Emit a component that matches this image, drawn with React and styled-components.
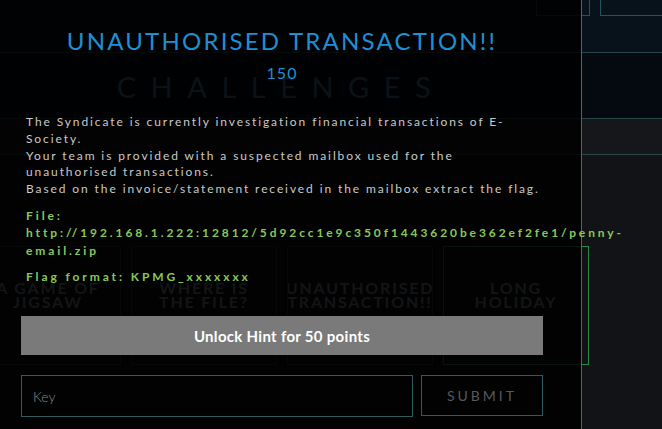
import React from "react";
import styled, { createGlobalStyle } from "styled-components";

const Global = createGlobalStyle`
  html, body { margin: 0; padding: 0; background: #111316; overflow: hidden; }
  body { font-family: Lato, "Open Sans", sans-serif; }
  * { box-sizing: border-box; }
`;

const Page = styled.div`
  position: relative;
  width: 662px;
  height: 429px;
  overflow: hidden;
  display: flex;
  flex-direction: column;
  background: #111316;
`;

const Header = styled.header`
  height: 53px;
  flex: none;
  background: #08121a;
  border-bottom: 1px solid #27464a;
  display: flex;
  justify-content: flex-end;
  align-items: flex-start;
  gap: 10px;
  margin-right: -20px;
`;

const NavButton = styled.div`
  margin-top: -16px;
  height: 32px;
  width: ${(p) => p.$w}px;
  border: 1px solid #23525a;
  color: #9aa7ad;
  font-size: 12px;
  letter-spacing: 2px;
  display: flex;
  align-items: center;
  justify-content: center;
  padding-bottom: 8px;
  line-height: 1;
`;

const TitleBand = styled.div`
  height: 66px;
  flex: none;
  background: #050a10;
  border-bottom: 1px solid #27464a;
  display: flex;
  align-items: center;
  justify-content: center;
  padding-right: 100px;
`;

const PageTitle = styled.h1`
  margin: 0;
  font-family: Lato, sans-serif;
  font-weight: 400;
  font-size: 29px;
  letter-spacing: 14.5px;
  color: #4a7fa8;
  padding-top: 2px;
`;

const TabBand = styled.div`
  height: 36px;
  flex: none;
  background: #16171a;
  border-bottom: 1px solid #27464a;
`;

const Content = styled.div`
  flex: 1;
  padding-top: 91px;
`;

const CardGrid = styled.div`
  display: grid;
  grid-template-columns: repeat(4, 146px);
  gap: 10px;
  margin-left: -25px;
`;

const Card = styled.div`
  height: 119px;
  border: 1px solid ${(p) => (p.$solved ? "#2c8a46" : "#1f3e44")};
  overflow: hidden;
  display: flex;
  align-items: flex-start;
  justify-content: center;
  padding-top: 34px;
  color: #838c94;
  font-weight: 700;
  font-size: 16px;
  line-height: 13.5px;
  letter-spacing: 1.8px;
  text-align: center;
  white-space: pre;
`;

const Modal = styled.div`
  position: absolute;
  top: 0;
  left: -17px;
  width: 599px;
  height: 100%;
  background: rgba(0, 0, 0, 0.86);
  border-right: 1px solid #3e6d70;
  padding: 27px 38px 0 38px;
  display: flex;
  flex-direction: column;
`;

const ModalTitle = styled.h2`
  margin: 0;
  text-align: center;
  font-family: Lato, sans-serif;
  font-weight: 400;
  font-size: 24px;
  line-height: 28px;
  letter-spacing: 2.2px;
  color: #1f8fd3;
`;

const Points = styled.div`
  text-align: center;
  font-size: 16px;
  line-height: 20px;
  letter-spacing: 1px;
  color: #1f8fd3;
  margin-top: 8px;
`;

const Description = styled.div`
  margin-top: 31px;
  padding: 0 3px 0 5px;
  color: #c9c9c9;
  font-size: 12px;
  line-height: 16.8px;
  letter-spacing: 1.9px;
`;

const Line = styled.p`
  margin: 0;
`;

const GreenBlock = styled.div`
  margin-top: ${(p) => p.$mt}px;
  padding: 0 3px 0 5px;
  color: #86c95a;
  font-weight: 700;
  font-size: 12px;
  line-height: 17.5px;
  letter-spacing: 2.9px;
  white-space: nowrap;
`;

const HintButton = styled.button`
  margin-top: 31px;
  height: 39px;
  width: 100%;
  border: none;
  background: #7a7a7a;
  color: #ffffff;
  font-family: Lato, sans-serif;
  font-weight: 700;
  font-size: 15px;
  letter-spacing: 0.3px;
  cursor: pointer;
  flex: none;
`;

const KeyRow = styled.div`
  margin-top: 20px;
  display: flex;
  gap: 8px;
`;

const KeyInput = styled.input`
  flex: 1;
  height: 42px;
  background: transparent;
  border: 1px solid #2d5c5e;
  padding: 0 11px;
  color: #ddd;
  font-family: Lato, sans-serif;
  font-size: 14px;
  font-weight: 300;
  outline: none;
  &::placeholder { color: #8a8a8a; }
`;

const SubmitButton = styled.button`
  width: 122px;
  height: 41px;
  background: transparent;
  border: 1px solid #2d5c5e;
  color: #555a5c;
  font-family: Lato, sans-serif;
  font-size: 14px;
  letter-spacing: 3px;
  padding-left: 6px;
`;

const cards = [
  { t: "A GAME OF\nJIGSAW" },
  { t: "WHERE IS\nTHE FILE?" },
  { t: "UNAUTHORISED\nTRANSACTION!!" },
  { t: "LONG\nHOLIDAY", solved: true },
];

export default function App() {
  return (
    <>
      <Global />
      <Page>
        <Header>
          <NavButton $w={54}>TEAM</NavButton>
          <NavButton $w={82}>PROFILE</NavButton>
        </Header>
        <TitleBand>
          <PageTitle>CHALLENGES</PageTitle>
        </TitleBand>
        <TabBand />
        <Content>
          <CardGrid>
            {cards.map((c, i) => (
              <Card key={i} $solved={c.solved}>
                {c.t}
              </Card>
            ))}
          </CardGrid>
        </Content>

        <Modal>
          <ModalTitle>UNAUTHORISED TRANSACTION!!</ModalTitle>
          <Points>150</Points>
          <Description>
            <Line>The Syndicate is currently investigation financial transactions of E-Society.</Line>
            <Line>Your team is provided with a suspected mailbox used for the unauthorised transactions.</Line>
            <Line>Based on the invoice/statement received in the mailbox extract the flag.</Line>
          </Description>
          <GreenBlock $mt={9}>
            File:
            <br />
            http://192.168.1.222:12812/5d92cc1e9c350f1443620be362ef2fe1/penny-
            <br />
            email.zip
          </GreenBlock>
          <GreenBlock $mt={8.5}>Flag format: KPMG_xxxxxxx</GreenBlock>
          <HintButton>Unlock Hint for 50 points</HintButton>
          <KeyRow>
            <KeyInput placeholder="Key" />
            <SubmitButton>SUBMIT</SubmitButton>
          </KeyRow>
        </Modal>
      </Page>
    </>
  );
}
